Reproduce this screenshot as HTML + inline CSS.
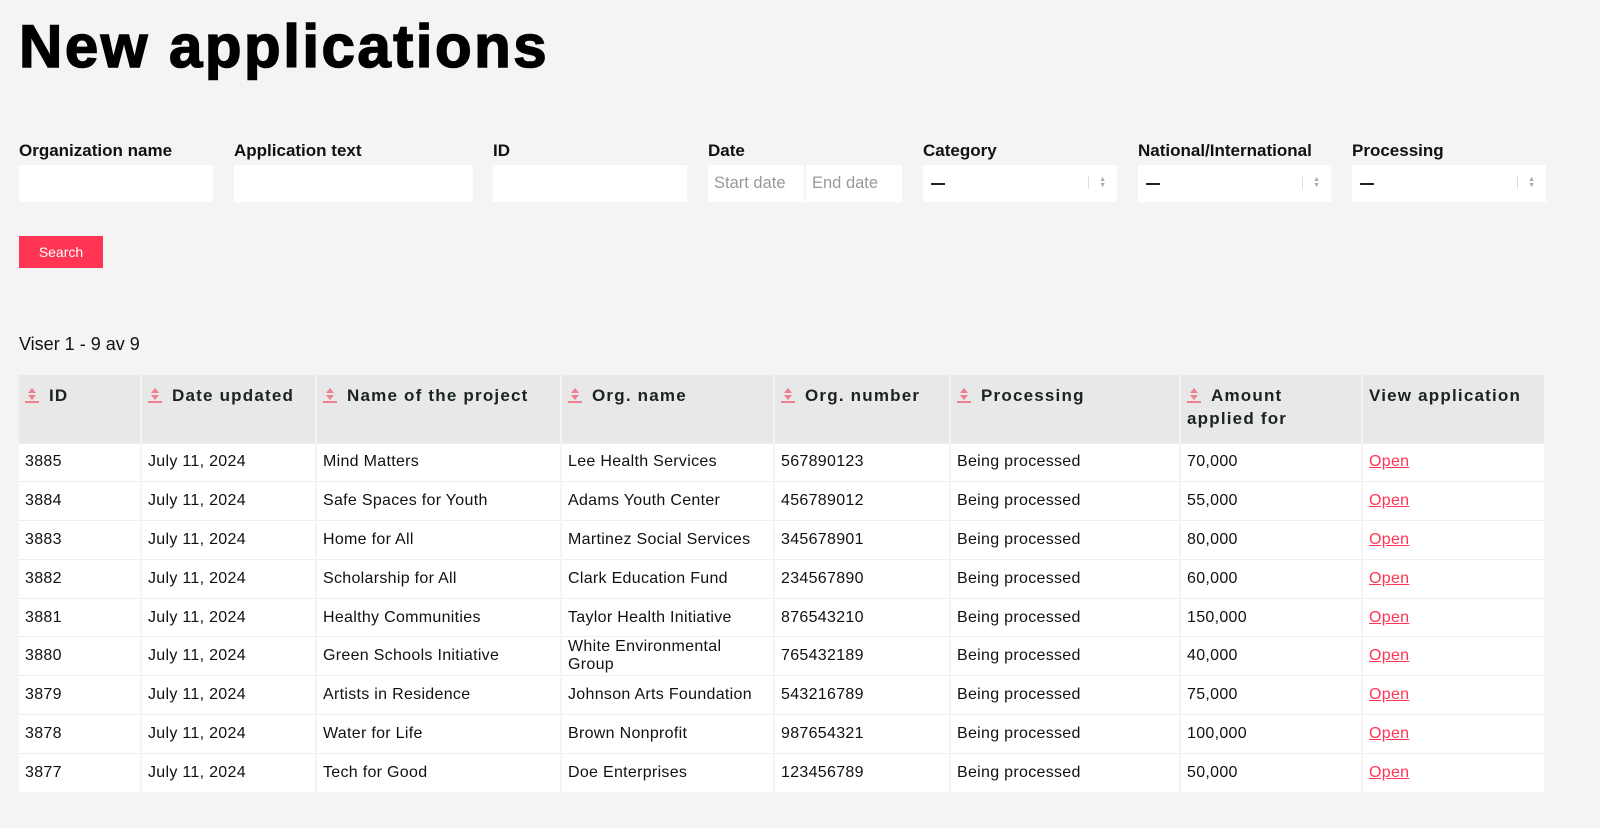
<!DOCTYPE html>
<html><head><meta charset="utf-8"><style>
*{box-sizing:border-box;margin:0;padding:0}
body{width:1600px;height:828px;background:#f4f4f4;font-family:"Liberation Sans",sans-serif;color:#111;position:relative;overflow:hidden}
h1{position:absolute;left:19px;top:12px;font-size:60px;font-weight:900;letter-spacing:2.5px;-webkit-text-stroke:1.5px #000;color:#000}
.lab{position:absolute;top:141px;font-size:17px;font-weight:bold}
.in{position:absolute;top:165px;height:37px;background:#fff;font-size:16.5px;color:#999;padding:9px 6px}
.sel::before{content:"";position:absolute;left:8px;top:18px;width:14px;height:1.5px;background:#222}
.sel::after{content:"";position:absolute;right:28px;top:11px;width:1px;height:13px;background:#ddd}
.ar{position:absolute;right:11px;top:12px;font-size:7px;line-height:6px;color:#aaa}
.btn{position:absolute;left:19px;top:236px;width:84px;height:32px;background:#ff3553;color:#fff;font-size:14px;text-align:center;line-height:32px}
.cnt{position:absolute;left:19px;top:334px;font-size:18px}
table{position:absolute;left:19px;top:375px;border-collapse:collapse;width:1527px;font-size:16px;letter-spacing:0.3px}
th{background:#e8e8e8;height:68px;vertical-align:top;text-align:left;padding:9px 6px 0;font-size:17px;letter-spacing:1.2px;color:#1a2222;border-right:2px solid #f4f4f4;line-height:23px}
td{background:#fff;height:38.8px;padding:0 6px;border-right:2px solid #f4f4f4;border-top:1px solid #eee;color:#111}
.s{display:inline-block;width:14px;height:16px;border-bottom:2px solid #f08090;margin-right:10px;vertical-align:-2px;position:relative}
.s::before{content:"";position:absolute;left:3px;top:1px;border:4px solid transparent;border-bottom:5px solid #f08090;border-top:0}
.s::after{content:"";position:absolute;left:3px;top:8px;border:4px solid transparent;border-top:5px solid #f08090;border-bottom:0}
a{color:#ff3553;text-decoration:underline}
</style></head><body>
<h1>New applications</h1>
<div class="lab" style="left:19px">Organization name</div>
<div class="lab" style="left:234px">Application text</div>
<div class="lab" style="left:493px">ID</div>
<div class="lab" style="left:708px">Date</div>
<div class="lab" style="left:923px">Category</div>
<div class="lab" style="left:1138px">National/International</div>
<div class="lab" style="left:1352px">Processing</div>
<div class="in" style="left:19px;width:194px"></div>
<div class="in" style="left:234px;width:239px"></div>
<div class="in" style="left:493px;width:194px"></div>
<div class="in" style="left:708px;width:96px">Start date</div>
<div class="in" style="left:806px;width:96px">End date</div>
<div class="in sel" style="left:923px;width:194px"><span class="ar">▲<br>▼</span></div>
<div class="in sel" style="left:1138px;width:193px"><span class="ar">▲<br>▼</span></div>
<div class="in sel" style="left:1352px;width:194px"><span class="ar">▲<br>▼</span></div>
<div class="btn">Search</div>
<div class="cnt">Viser 1 - 9 av 9</div>
<table>
<tr><th style="width:122px"><span class="s"></span>ID</th><th style="width:175px"><span class="s"></span>Date updated</th><th style="width:245px"><span class="s"></span>Name of the project</th><th style="width:213px"><span class="s"></span>Org. name</th><th style="width:176px"><span class="s"></span>Org. number</th><th style="width:230px"><span class="s"></span>Processing</th><th style="width:182px"><span class="s"></span>Amount<br>applied for</th><th>View application</th></tr>
<tr><td>3885</td><td>July 11, 2024</td><td>Mind Matters</td><td>Lee Health Services</td><td>567890123</td><td>Being processed</td><td>70,000</td><td><a>Open</a></td></tr>
<tr><td>3884</td><td>July 11, 2024</td><td>Safe Spaces for Youth</td><td>Adams Youth Center</td><td>456789012</td><td>Being processed</td><td>55,000</td><td><a>Open</a></td></tr>
<tr><td>3883</td><td>July 11, 2024</td><td>Home for All</td><td>Martinez Social Services</td><td>345678901</td><td>Being processed</td><td>80,000</td><td><a>Open</a></td></tr>
<tr><td>3882</td><td>July 11, 2024</td><td>Scholarship for All</td><td>Clark Education Fund</td><td>234567890</td><td>Being processed</td><td>60,000</td><td><a>Open</a></td></tr>
<tr><td>3881</td><td>July 11, 2024</td><td>Healthy Communities</td><td>Taylor Health Initiative</td><td>876543210</td><td>Being processed</td><td>150,000</td><td><a>Open</a></td></tr>
<tr><td>3880</td><td>July 11, 2024</td><td>Green Schools Initiative</td><td>White Environmental Group</td><td>765432189</td><td>Being processed</td><td>40,000</td><td><a>Open</a></td></tr>
<tr><td>3879</td><td>July 11, 2024</td><td>Artists in Residence</td><td>Johnson Arts Foundation</td><td>543216789</td><td>Being processed</td><td>75,000</td><td><a>Open</a></td></tr>
<tr><td>3878</td><td>July 11, 2024</td><td>Water for Life</td><td>Brown Nonprofit</td><td>987654321</td><td>Being processed</td><td>100,000</td><td><a>Open</a></td></tr>
<tr><td>3877</td><td>July 11, 2024</td><td>Tech for Good</td><td>Doe Enterprises</td><td>123456789</td><td>Being processed</td><td>50,000</td><td><a>Open</a></td></tr>
</table>
</body></html>
